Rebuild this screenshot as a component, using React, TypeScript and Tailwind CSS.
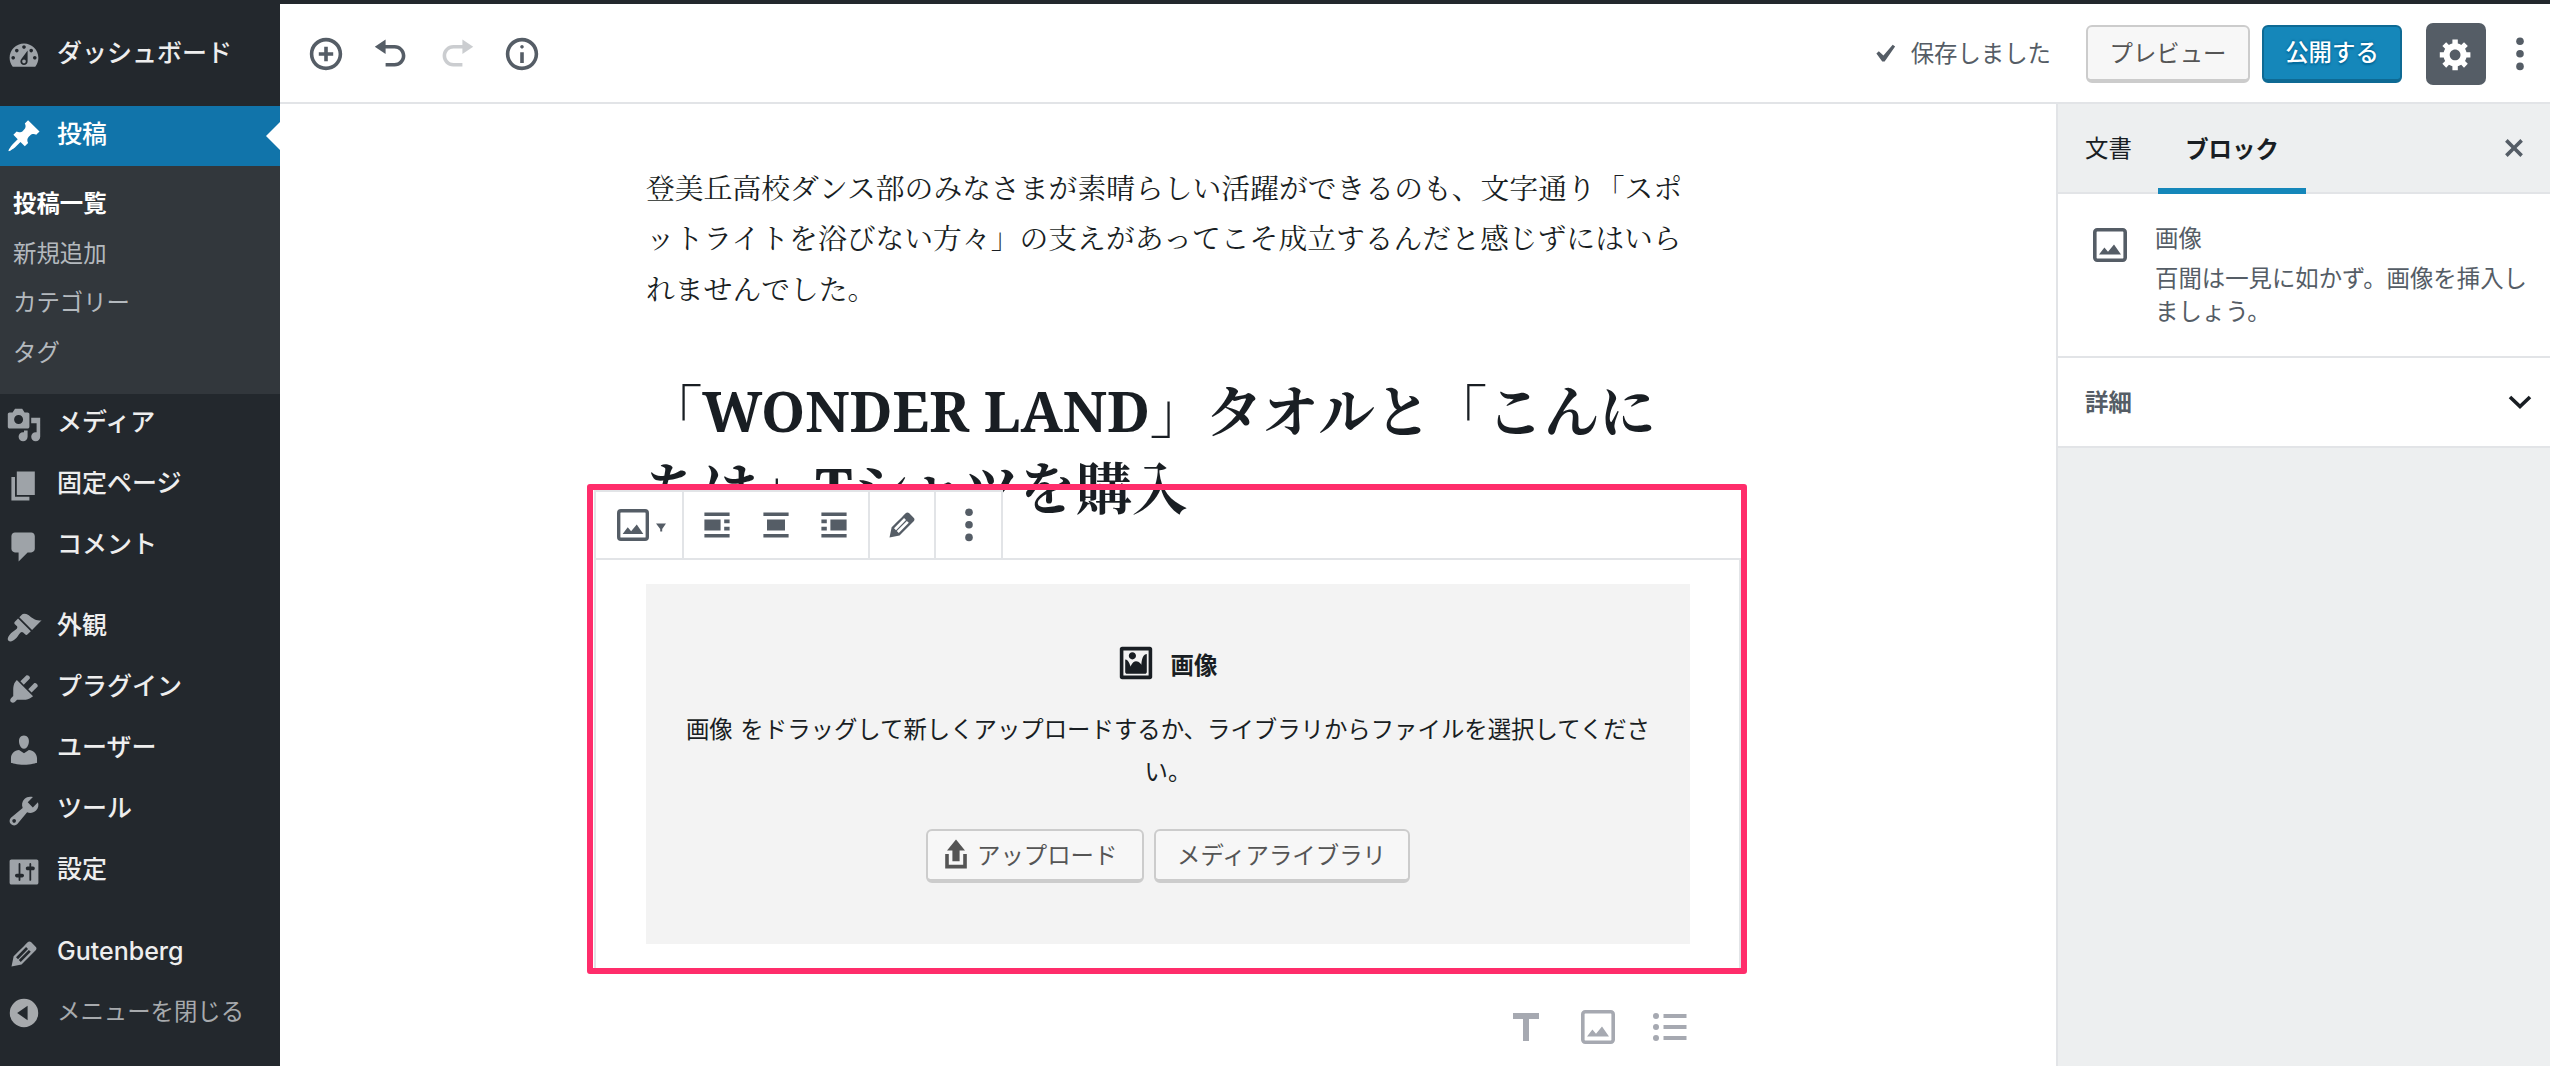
import type { ReactNode } from 'react';

const ICONS = {
  dashboard:
    'M3.76 16h12.48c1.1-1.37 1.76-3.11 1.76-5 0-4.42-3.58-8-8-8s-8 3.58-8 8c0 1.89.66 3.63 1.76 5zM10 4c.55 0 1 .45 1 1s-.45 1-1 1-1-.45-1-1 .45-1 1-1zM6 6c.55 0 1 .45 1 1s-.45 1-1 1-1-.45-1-1 .45-1 1-1zm8 0c.55 0 1 .45 1 1s-.45 1-1 1-1-.45-1-1 .45-1 1-1zm-5.37 5.55L12 7v6c0 1.1-.9 2-2 2s-2-.9-2-2c0-.57.24-1.08.63-1.45zM4 10c.55 0 1 .45 1 1s-.45 1-1 1-1-.45-1-1 .45-1 1-1zm12 0c.55 0 1 .45 1 1s-.45 1-1 1-1-.45-1-1 .45-1 1-1zm-5 3c0-.55-.45-1-1-1s-1 .45-1 1 .45 1 1 1 1-.45 1-1z',
  post: 'M10.44 3.02l1.82-1.82 6.36 6.35-1.83 1.82c-1.05-.68-2.48-.57-3.41.36l-.75.75c-.92.93-1.04 2.35-.35 3.41l-1.83 1.82-2.41-2.41-2.8 2.79c-.42.42-3.38 2.71-3.8 2.29s1.86-3.39 2.28-3.81l2.79-2.79L4.1 9.36l1.83-1.82c1.05.69 2.48.57 3.4-.36l.75-.75c.93-.92 1.05-2.35.36-3.41z',
  media:
    'M13 11V4c0-.55-.45-1-1-1h-1.67L9 1H5L3.67 3H2c-.55 0-1 .45-1 1v7c0 .55.45 1 1 1h10c.55 0 1-.45 1-1zM7 4.5c1.38 0 2.5 1.12 2.5 2.5S8.38 9.5 7 9.5 4.5 8.38 4.5 7 5.62 4.5 7 4.5zM14 6h5v10.5c0 1.38-1.12 2.5-2.5 2.5S14 17.88 14 16.5s1.12-2.5 2.5-2.5c.17 0 .34.02.5.05V9h-3V6zm-4 8.05V13h2v3.5c0 1.38-1.12 2.5-2.5 2.5S7 17.88 7 16.5 8.12 14 9.5 14c.17 0 .34.02.5.05z',
  page: 'M6 15V2h10v13H6zm-1 1h8v2H3V5h2v11z',
  comments: 'M5 2h9c1.1 0 2 .9 2 2v7c0 1.1-.9 2-2 2h-2l-5 5v-5H5c-1.1 0-2-.9-2-2V4c0-1.1.9-2 2-2z',
  appearance:
    'M14.48 11.06L7.41 3.99l1.5-1.5c.5-.56 2.3-.47 3.51.32 1.21.8 1.43 1.28 2.91 2.1 1.18.64 2.45 1.26 4.45.85zm-.71.71L6.7 4.7 4.93 6.47c-.39.39-.39 1.02 0 1.41l1.06 1.06c.39.39.39 1.03 0 1.42-.6.6-1.43 1.11-2.21 1.69-.35.26-.7.53-1.01.84C1.43 14.23.4 16.08 1.4 17.07c.99 1 2.84-.03 4.18-1.36.31-.31.58-.66.85-1.02.57-.78 1.08-1.61 1.69-2.21.39-.39 1.02-.39 1.41 0l1.06 1.06c.39.39 1.02.39 1.41 0z',
  plugins:
    'M13.11 4.36L9.87 7.6 8 5.73l3.24-3.24c.35-.34 1.05-.2 1.56.32.52.51.66 1.21.31 1.55zm-8 1.77l.91-1.12 9.01 9.01-1.19.84c-.71.71-2.63 1.16-3.82 1.16H6.14L4.9 17.26c-.59.59-1.54.59-2.12 0-.59-.58-.59-1.53 0-2.12l1.24-1.24v-3.88c0-1.13.4-3.19 1.09-3.89zm7.26 3.97l3.24-3.24c.34-.35 1.04-.21 1.55.31.52.51.66 1.21.31 1.55l-3.24 3.25z',
  users:
    'M10 9.25c-2.27 0-2.73-3.44-2.73-3.44C7 4.02 7.82 2 9.97 2c2.16 0 2.98 2.02 2.71 3.81 0 0-.41 3.44-2.68 3.44zm0 2.57L12.72 10c2.39 0 4.52 2.33 4.52 4.53v2.49s-3.65 1.13-7.24 1.13c-3.65 0-7.24-1.13-7.24-1.13v-2.49c0-2.25 1.94-4.48 4.47-4.48z',
  tools:
    'M16.68 9.77c-1.34 1.34-3.3 1.67-4.95.99l-5.41 6.52c-.99.99-2.59.99-3.58 0s-.99-2.59 0-3.57l6.52-5.42c-.68-1.65-.35-3.61.99-4.95 1.28-1.28 3.12-1.62 4.72-1.06l-2.89 2.89 2.82 2.82 2.86-2.87c.53 1.58.18 3.39-1.08 4.65zM3.81 16.21c.4.39 1.04.39 1.43 0 .4-.4.4-1.04 0-1.43-.39-.4-1.03-.4-1.43 0-.39.39-.39 1.03 0 1.43z',
  settings:
    'M18 16V4c0-.55-.45-1-1-1H3c-.55 0-1 .45-1 1v12c0 .55.45 1 1 1h14c.55 0 1-.45 1-1zM8 11h1c.55 0 1 .45 1 1s-.45 1-1 1H8v1.5c0 .28-.22.5-.5.5s-.5-.22-.5-.5V13H6c-.55 0-1-.45-1-1s.45-1 1-1h1V5.5c0-.28.22-.5.5-.5s.5.22.5.5V11zm5-2h-1c-.55 0-1-.45-1-1s.45-1 1-1h1V5.5c0-.28.22-.5.5-.5s.5.22.5.5V7h1c.55 0 1 .45 1 1s-.45 1-1 1h-1v5.5c0 .28-.22.5-.5.5s-.5-.22-.5-.5V9z',
  edit: 'M13.89 3.39l2.71 2.72c.46.46.42 1.24.03 1.64l-8.01 8.02-5.56 1.16 1.16-5.58s7.6-7.63 7.99-8.03c.39-.39 1.22-.39 1.68.07zm-2.73 2.79l-5.59 5.61 1.11 1.11 5.54-5.65zm-2.97 8.23l5.58-5.6-1.07-1.08-5.59 5.6z',
  collapse: 'M10 2.1a7.9 7.9 0 1 0 0 15.8 7.9 7.9 0 0 0 0-15.8zM12 6v8L6.2 10z',
  insert:
    'M10 1c-5 0-9 4-9 9s4 9 9 9 9-4 9-9-4-9-9-9zm0 16c-3.9 0-7-3.1-7-7s3.1-7 7-7 7 3.1 7 7-3.1 7-7 7zm1-11H9v3H6v2h3v3h2v-3h3V9h-3z',
  undo: 'M12 5H7V2L1 6l6 4V7h5c2.2 0 4 1.8 4 4s-1.8 4-4 4H7v2h5c3.3 0 6-2.7 6-6s-2.7-6-6-6z',
  redo: 'M8 5h5V2l6 4-6 4V7H8c-2.2 0-4 1.8-4 4s1.8 4 4 4h5v2H8c-3.3 0-6-2.7-6-6s2.7-6 6-6z',
  info: 'M9 15h2V9H9v6zm1-10c-.5 0-1 .5-1 1s.5 1 1 1 1-.5 1-1-.5-1-1-1zm0-4c-5 0-9 4-9 9s4 9 9 9 9-4 9-9-4-9-9-9zm0 16c-3.9 0-7-3.1-7-7s3.1-7 7-7 7 3.1 7 7-3.1 7-7 7z',
  yes: 'M14.83 4.89l1.34.94-5.81 8.38H9.02L5.78 9.67l1.34-1.25 2.57 2.4z',
  gear: 'M18 12h-2.18c-.17.7-.44 1.35-.81 1.93l1.54 1.54-2.1 2.1-1.54-1.54c-.58.36-1.23.63-1.91.79V19H8v-2.18c-.68-.16-1.33-.43-1.91-.79l-1.54 1.54-2.12-2.12 1.54-1.54c-.36-.58-.63-1.23-.79-1.91H1V9.03h2.17c.16-.7.44-1.35.8-1.94L2.43 5.55l2.1-2.1 1.54 1.54c.58-.37 1.24-.64 1.93-.81V2h3v2.18c.68.16 1.33.43 1.91.79l1.54-1.54 2.12 2.12-1.54 1.54c.36.59.64 1.24.8 1.94H18V12zm-8.5 1.5c1.66 0 3-1.34 3-3s-1.34-3-3-3-3 1.34-3 3 1.34 3 3 3z',
  close:
    'M14.95 6.46L11.41 10l3.54 3.54-1.41 1.41L10 11.42l-3.53 3.53-1.42-1.42L8.58 10 5.05 6.47l1.42-1.42L10 8.58l3.54-3.53z',
  formatImage:
    'M2.25 1h15.5c.69 0 1.25.56 1.25 1.25v15.5c0 .69-.56 1.25-1.25 1.25H2.25C1.56 19 1 18.44 1 17.75V2.25C1 1.56 1.56 1 2.25 1zM17 17V3H3v14h14zM10 6c0-1.1-.9-2-2-2s-2 .9-2 2 .9 2 2 2 2-.9 2-2zm3 5s0-6 3-6v10c0 .55-.45 1-1 1H5c-.55 0-1-.45-1-1V8c2 0 3 4 3 4s1-3 3-3 3 2 3 2z',
  upload: 'M8 14V8H5l5-6 5 6h-3v6H8zm-2 2v-6H4v8h12.01v-8H14v6H6z',
  alignLeft: 'M3 3h14v2H3zM3 7h9v6H3zM14 7h3v2h-3zM14 11h3v2h-3zM3 15h14v2H3z',
  alignCenter: 'M3 3h14v2H3zM5 7h10v6H5zM3 15h14v2H3z',
  alignRight: 'M3 3h14v2H3zM8 7h9v6H8zM3 7h3v2H3zM3 11h3v2H3zM3 15h14v2H3z',
};

type IconName = keyof typeof ICONS;

function Icon({ name, className = 'size-9' }: { name: IconName; className?: string }) {
  return (
    <svg viewBox="0 0 20 20" fill="currentColor" fillRule="evenodd" className={`shrink-0 ${className}`}>
      <path d={ICONS[name]} />
    </svg>
  );
}

function ImageIcon({ className }: { className: string }) {
  return (
    <svg viewBox="0 0 34 34" className={`shrink-0 ${className}`} fill="currentColor">
      <rect x="1.8" y="1.8" width="30.4" height="30.4" rx="2.4" fill="none" stroke="currentColor" strokeWidth="3.6" />
      <path d="M6 26.5l5.4-7 3.6 4.2 6-7.2 7 10z" />
    </svg>
  );
}

function Dots({ className = '' }: { className?: string }) {
  return (
    <svg viewBox="0 0 8 34" className={`h-[34px] w-2 shrink-0 ${className}`} fill="currentColor">
      <circle cx="4" cy="4.2" r="3.8" />
      <circle cx="4" cy="16.8" r="3.8" />
      <circle cx="4" cy="29.4" r="3.8" />
    </svg>
  );
}

function MenuItem({ icon, children }: { icon: IconName; children: ReactNode }) {
  return (
    <div className="flex h-[61px] items-center gap-[15px] pl-[6px] text-[#9ea3a8]">
      <Icon name={icon} />
      <span className="pb-[6px] font-medium text-[#eee]">{children}</span>
    </div>
  );
}

function AdminMenu() {
  return (
    <nav className="flex h-full w-[280px] shrink-0 flex-col bg-[#23282d] pt-[21px] text-[25px] leading-[36px]">
      <MenuItem icon="dashboard">ダッシュボード</MenuItem>
      <div className="relative mt-[20px] flex h-[60px] shrink-0 items-center gap-[15px] bg-[#1174aa] pl-[6px] text-white">
        <Icon name="post" />
        <span className="pb-[5px] font-medium">投稿</span>
        <span className="absolute top-[16px] right-0 h-7 w-[14px] bg-white [clip-path:polygon(100%_0,100%_100%,0_50%)]" />
      </div>
      <ul className="h-[228px] shrink-0 bg-[#32373c] pt-[13px] pl-[13px] text-[23.4px] leading-[49.6px] text-[#b4b9be]">
        <li className="font-bold text-white">投稿一覧</li>
        <li>新規追加</li>
        <li>カテゴリー</li>
        <li>タグ</li>
      </ul>
      <MenuItem icon="media">メディア</MenuItem>
      <MenuItem icon="page">固定ページ</MenuItem>
      <MenuItem icon="comments">コメント</MenuItem>
      <div className="h-[20px]" />
      <MenuItem icon="appearance">外観</MenuItem>
      <MenuItem icon="plugins">プラグイン</MenuItem>
      <MenuItem icon="users">ユーザー</MenuItem>
      <MenuItem icon="tools">ツール</MenuItem>
      <MenuItem icon="settings">設定</MenuItem>
      <div className="h-[21px]" />
      <MenuItem icon="edit">Gutenberg</MenuItem>
      <div className="flex h-[57px] items-center gap-[15px] pl-[6px] text-[23.4px] text-[#a7aaad]">
        <Icon name="collapse" />
        <span className="pb-[2px]">メニューを閉じる</span>
      </div>
    </nav>
  );
}

function Header() {
  return (
    <header className="flex h-[100px] shrink-0 items-center border-b-2 border-[#e2e4e7] bg-white pt-px pr-[26px] pl-[28px] text-[23.4px] text-[#555d66]">
      <div className="flex items-center gap-[29.4px]">
        <Icon name="insert" />
        <Icon name="undo" />
        <Icon name="redo" className="size-9 opacity-30" />
        <Icon name="info" />
      </div>
      <div className="ml-auto flex items-center">
        <Icon name="yes" />
        <span className="ml-[9px]">保存しました</span>
        <button className="ml-[35px] flex h-[58px] w-[164px] items-center justify-center rounded-[6px] border-2 border-b-4 border-[#ccc] bg-[#f7f7f7] pt-[2px] text-[#555]">
          プレビュー
        </button>
        <button className="ml-[12px] flex h-[58px] w-[140px] items-center justify-center rounded-[6px] border-2 border-b-4 border-[#0e6a94] bg-[#1587ba] pt-[1px] font-medium text-white [text-shadow:0_-1px_2px_#006799,0_2px_2px_#006799]">
          公開する
        </button>
        <button className="ml-[24px] flex h-[62px] w-[60px] items-center justify-center rounded-[7px] bg-[#555d66] text-white">
          <Icon name="gear" />
        </button>
        <Dots className="ml-[30px]" />
      </div>
    </header>
  );
}

function BlockToolbar() {
  return (
    <div className="flex h-[70px] w-[409px] border-2 border-[#e2e4e7] bg-white text-[#555d66]">
      <div className="flex w-[88px] items-center border-r-2 border-[#e2e4e7] pl-[21px]">
        <ImageIcon className="size-8" />
        <svg viewBox="0 0 10 9" className="mt-1 ml-[7px] h-[9px] w-[10px]" fill="currentColor">
          <path d="M0 .5h10L6.2 6v2.5H4.2V6z" />
        </svg>
      </div>
      <div className="flex w-[186px] items-center justify-between border-r-2 border-[#e2e4e7] pr-[16px] pl-[15px]">
        <Icon name="alignLeft" />
        <Icon name="alignCenter" />
        <Icon name="alignRight" />
      </div>
      <div className="flex w-[66px] items-center justify-center border-r-2 border-[#e2e4e7]">
        <Icon name="edit" />
      </div>
      <div className="flex flex-1 items-center justify-center">
        <Dots />
      </div>
    </div>
  );
}

function ImageBlock() {
  return (
    <section className="absolute top-[380px] left-[307px] h-[490px] w-[1160px] rounded-[3px] border-6 border-[#ff2d6b] pl-px">
      <BlockToolbar />
      <div className="-mt-[2px] h-[410px] border-2 border-b-0 border-[#e2e4e7] bg-white pt-[24px] pr-[49px] pl-[50px]">
        <div className="flex h-[360px] flex-col items-center bg-[#f3f3f3] pt-[61px] text-[23.4px] leading-[42px] text-[#191e23]">
          <div className="flex h-[36px] items-center gap-[17px] pr-px">
            <Icon name="formatImage" />
            <span className="pt-[6px] font-bold">画像</span>
          </div>
          <p className="mt-[28px] text-center whitespace-nowrap [word-spacing:1px]">
            画像 をドラッグして新しくアップロードするか、ライブラリからファイルを選択してくださ
            <br />
            い。
          </p>
          <div className="mt-[36px] flex gap-[10px] text-[#555]">
            <button className="flex h-[54px] w-[218px] items-center rounded-[6px] border-2 border-b-4 border-[#ccc] bg-[#f7f7f7] pl-[10px]">
              <Icon name="upload" className="mb-[2px] size-9" />
              <span className="ml-[3px] pt-[1px]">アップロード</span>
            </button>
            <button className="flex h-[54px] w-[256px] items-center justify-center rounded-[6px] border-2 border-b-4 border-[#ccc] bg-[#f7f7f7] pt-[1px] pr-px">
              メディアライブラリ
            </button>
          </div>
        </div>
      </div>
    </section>
  );
}

function Canvas() {
  return (
    <main className="relative flex-1 overflow-hidden bg-white">
      <div className="ml-[366px] flex h-full w-[1044px] flex-col pt-[58px] font-['Noto_Serif_CJK_JP','Noto_Serif_JP','Noto_Sans_CJK_JP',serif] whitespace-nowrap text-[#191e23]">
        <p className="text-[28.8px] leading-[50.4px]">
          登美丘高校ダンス部のみなさまが素晴らしい活躍ができるのも、文字通り「スポ
          <br />
          ットライトを浴びない方々」の支えがあってこそ成立するんだと感じずにはいら
          <br />
          れませんでした。
        </p>
        <h2 className="mt-[56px] text-[56.16px] leading-[77px] font-bold">
          「
          <span className="font-['Noto_Serif','Liberation_Serif',serif] leading-0">WONDER LAND</span>
          」タオルと「こんに
          <br />
          ちは」
          <span className="ml-px font-['Noto_Serif','Liberation_Serif',serif] leading-0">T</span>
          シャツを購入
        </h2>
        <div className="mt-auto mb-[21px] flex h-9 items-center justify-end gap-[38px] pr-[3px] text-[#a6a9b1]">
          <svg viewBox="0 0 26 28" className="mr-[4px] h-7 w-[26px]" fill="currentColor">
            <path d="M0 0h26v6H16v22h-6V6H0z" />
          </svg>
          <ImageIcon className="size-[34px]" />
          <svg viewBox="0 0 34 28" className="h-7 w-[34px]" fill="currentColor">
            <circle cx="3" cy="3" r="3" />
            <circle cx="3" cy="14" r="3" />
            <circle cx="3" cy="25" r="3" />
            <path d="M10.5 1h23v4h-23zM10.5 12h23v4h-23zM10.5 23h23v4h-23z" />
          </svg>
        </div>
      </div>
      <ImageBlock />
    </main>
  );
}

function SettingsSidebar() {
  return (
    <aside className="w-[494px] shrink-0 border-l-2 border-[#e2e4e7] bg-[#edeff0] text-[23.4px] text-[#555d66]">
      <div className="flex h-[90px] border-b-2 border-[#e2e4e7] text-[#191e23]">
        <div className="flex w-[100px] items-center pt-[2px] pl-[27px]">文書</div>
        <div className="flex h-[90px] w-[148px] items-center justify-center border-b-6 border-[#1587ba] pt-[7px] font-bold">
          ブロック
        </div>
        <div className="ml-auto flex items-center pr-[18px] text-[#555d66]">
          <Icon name="close" />
        </div>
      </div>
      <div className="flex h-[164px] border-b-2 border-[#e2e4e7] bg-white pt-[26px] pl-[35px]">
        <ImageIcon className="mt-[8px] size-[34px]" />
        <div className="ml-[28px] pt-[3px] leading-[32.4px] whitespace-nowrap">
          <div className="mb-[8px]">画像</div>
          <p>
            百聞は一見に如かず。画像を挿入し
            <br />
            ましょう。
          </p>
        </div>
      </div>
      <div className="flex h-[90px] items-center justify-between border-b-2 border-[#e2e4e7] bg-white pr-[18px] pl-[27px]">
        <span className="pt-[2px] font-bold">詳細</span>
        <svg viewBox="0 0 24 15" className="h-[15px] w-6 text-[#191e23]" fill="none" stroke="currentColor" strokeWidth="3.6">
          <path d="M2 2l10 9.6L22 2" />
        </svg>
      </div>
    </aside>
  );
}

export default function App() {
  return (
    <div className="flex h-[1066px] w-[2550px] flex-col overflow-hidden bg-white font-['Inter','Noto_Sans_CJK_JP',sans-serif]" lang="ja">
      <div className="h-1 shrink-0 bg-[#23282d]" />
      <div className="flex min-h-0 flex-1">
        <AdminMenu />
        <div className="flex min-w-0 flex-1 flex-col">
          <Header />
          <div className="flex min-h-0 flex-1">
            <Canvas />
            <SettingsSidebar />
          </div>
        </div>
      </div>
    </div>
  );
}
